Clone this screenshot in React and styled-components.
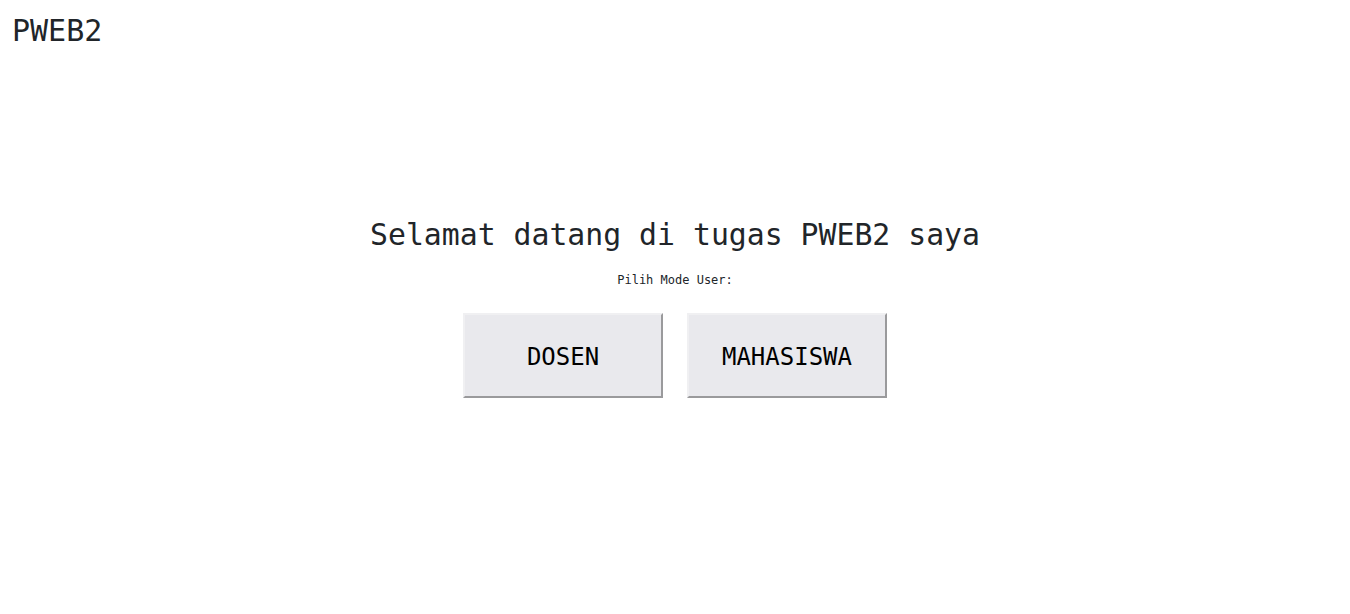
import React from "react";
import styled, { createGlobalStyle } from "styled-components";

const Global = createGlobalStyle`
  html, body { margin: 0; padding: 0; background: #ffffff; }
  body { font-family: "DejaVu Sans Mono", "Liberation Mono", monospace; color: #212529; }
`;

const Page = styled.div`
  display: grid;
  grid-template-areas: "stack";
  min-height: 100vh;
`;

const Header = styled.header`
  grid-area: stack;
  align-self: start;
  padding: 13px 12px 0;
`;

const Brand = styled.div`
  font-size: 30px;
  line-height: 1.2;
`;

const Main = styled.main`
  grid-area: stack;
  align-self: center;
  display: flex;
  flex-direction: column;
  align-items: center;
  padding-top: 1px;
`;

const Title = styled.h1`
  margin: 0;
  font-size: 29.8px;
  font-weight: normal;
  line-height: 1.2;
`;

const Subtitle = styled.p`
  margin: 20px 0 0;
  font-size: 12px;
  line-height: 1.2;
`;

const Buttons = styled.div`
  display: flex;
  gap: 24px;
  margin-top: 25px;
`;

const ModeButton = styled.button`
  width: 200px;
  height: 85px;
  box-sizing: border-box;
  background: #e9e9ed;
  border-width: 2px;
  border-style: solid;
  border-color: #f0f0f2 #9a9a9c #9a9a9c #f0f0f2;
  font-family: "DejaVu Sans Mono", monospace;
  font-size: 24px;
  color: #000000;
  cursor: pointer;
  padding: 4px 0 0;
`;

export default function App() {
  return (
    <Page>
      <Global />
      <Header>
        <Brand>PWEB2</Brand>
      </Header>
      <Main>
        <Title>Selamat datang di tugas PWEB2 saya</Title>
        <Subtitle>Pilih Mode User:</Subtitle>
        <Buttons>
          <ModeButton>DOSEN</ModeButton>
          <ModeButton>MAHASISWA</ModeButton>
        </Buttons>
      </Main>
    </Page>
  );
}
